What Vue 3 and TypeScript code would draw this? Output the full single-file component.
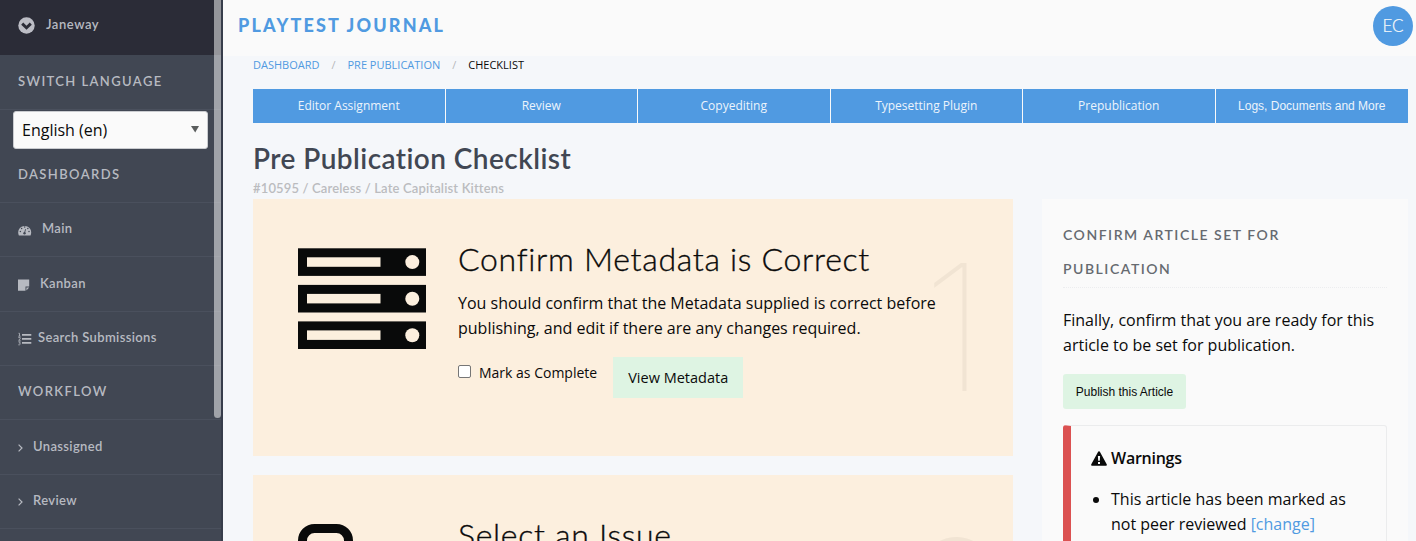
<script setup lang="ts">
const tabs: string[] = ['Editor Assignment', 'Review', 'Copyediting', 'Typesetting Plugin', 'Prepublication']
</script>

<template>
  <div class="page">
    <aside class="sidebar">
      <div class="brand">
        <svg width="17" height="17" viewBox="0 0 17 17"><circle cx="8.5" cy="8.5" r="8.2" fill="#bcbdc5" /><path d="M4.2 6.6 8.5 10.8 12.8 6.6" fill="none" stroke="#2b2c37" stroke-width="2.9" /></svg>
        <span>Janeway</span>
      </div>
      <div class="side-title bordered lang">SWITCH LANGUAGE</div>
      <div class="select"><span>English (en)</span><svg width="8" height="7" viewBox="0 0 8 7"><path d="M0 0H8L4.2 6.5Z" fill="#5a5d5d" /></svg></div>
      <div class="side-title bordered dash">DASHBOARDS</div>
      <div class="side-item bordered main-item">
        <svg width="14" height="12" viewBox="0 0 14 12"><path d="M.9 11.4A6.5 6.5 0 1 1 12.5 11.4Z" fill="#b7bac1" /><g fill="#414753"><circle cx="2.4" cy="7.6" r=".75" /><circle cx="3.6" cy="4.5" r=".75" /><circle cx="6.7" cy="3.1" r=".75" /><circle cx="9.8" cy="4.5" r=".75" /><circle cx="11" cy="7.6" r=".75" /><circle cx="6.5" cy="9.2" r="1.2" /></g><path d="M6.5 9 7.6 5.2" stroke="#414753" stroke-width=".9" /></svg>
        <span>Main</span>
      </div>
      <div class="side-item bordered kanban">
        <svg width="12" height="12" viewBox="0 0 12 12"><path d="M0 .5H11.2V7.5H7.5V11.7H0Z M8.4 8.5H11.2L8.4 11.4Z" fill="#b7bac1" /></svg>
        <span>Kanban</span>
      </div>
      <div class="side-item bordered search">
        <svg width="14" height="14" viewBox="0 0 14 14"><path d="M4 2.9H13.3M4 6.9H13.3M4 10.9H13.3" stroke="#b7bac1" stroke-width="1.8" /><path d="M.5 1.3H1.5V4M.3 4.2H2.6M.3 5.6H2.2V6.7L.6 8.3H2.6M.3 9.8H2.3L1.4 11.2C3 11.3 2.6 13.2.3 12.8" fill="none" stroke="#b7bac1" stroke-width=".8" /></svg>
        <span>Search Submissions</span>
      </div>
      <div class="side-title bordered flow">WORKFLOW</div>
      <div class="side-item bordered arrow">
        <svg width="5" height="8" viewBox="0 0 5 8"><path d="M.6.6 4 4 .6 7.4" fill="none" stroke="#b7bac1" stroke-width="1.2" /></svg>
        <span>Unassigned</span>
      </div>
      <div class="side-item bordered arrow review">
        <svg width="5" height="8" viewBox="0 0 5 8"><path d="M.6.6 4 4 .6 7.4" fill="none" stroke="#b7bac1" stroke-width="1.2" /></svg>
        <span>Review</span>
      </div>
      <div class="scroll-thumb"></div>
    </aside>

    <div class="content">
      <header class="topbar">
        <div class="journal">PLAYTEST JOURNAL</div>
        <div class="avatar">EC</div>
      </header>
      <main>
        <nav class="crumbs">
          <a class="c1">DASHBOARD</a><i>/</i><a class="c2">PRE PUBLICATION</a><i>/</i><b>CHECKLIST</b>
        </nav>
        <nav class="tabs">
          <a v-for="tab in tabs" :key="tab">{{ tab }}</a>
          <a class="more">Logs, Documents and More</a>
        </nav>
        <h1><span>Pre Publication Checklist</span></h1>
        <p class="sub"><span>#10595 / Careless / Late Capitalist Kittens</span></p>
        <div class="columns">
          <div class="cards">
            <section class="card">
              <svg class="card-icon" width="128" height="102" viewBox="0 0 128 102">
                <g v-for="y in [0.3, 36.9, 73.4]" :key="y" :transform="`translate(0 ${y})`">
                  <rect width="128" height="27.6" fill="#090a0a" />
                  <rect x="9" y="9" width="73.5" height="9.5" fill="#fcefde" />
                  <circle cx="114.3" cy="13.8" r="7" fill="#fcefde" />
                </g>
              </svg>
              <div class="card-body">
                <h2 class="t1">Confirm Metadata is Correct</h2>
                <p class="desc">You should confirm that the Metadata supplied is correct before<br />publishing, and edit if there are any changes required.</p>
                <div class="actions">
                  <span class="box"></span><span class="mark">Mark as Complete</span>
                  <a class="view">View Metadata</a>
                </div>
              </div>
              <div class="number">1</div>
            </section>
            <section class="card">
              <svg class="card-icon" width="128" height="102" viewBox="0 0 128 102"><rect x="4.5" y="4.5" width="46" height="90" rx="12" fill="none" stroke="#090a0a" stroke-width="9" /></svg>
              <div class="card-body">
                <h2 class="t2">Select an Issue</h2>
              </div>
              <div class="number">2</div>
            </section>
          </div>
          <section class="panel">
            <h3><span class="p1">CONFIRM ARTICLE SET FOR</span><br /><span class="p2">PUBLICATION</span></h3>
            <p class="final">Finally, confirm that you are ready for this<br />article to be set for publication.</p>
            <a class="publish">Publish this Article</a>
            <div class="warning">
              <div class="warn-title">
                <svg width="16" height="15" viewBox="0 0 16 15"><path d="M8 .2C8.6.2 8.8.6 9 1L15.7 13.2C16.1 14 15.7 14.8 14.8 14.8H1.2C.3 14.8-.1 14 .3 13.2L7 1C7.2.6 7.4.2 8 .2Z" fill="#090a0a" /><path d="M6.9 5H9.1L8.8 9.8H7.2ZM7 11H9V12.9H7Z" fill="#fafafa" /></svg>
                <strong>Warnings</strong>
              </div>
              <ul><li>This article has been marked as<br />not peer reviewed <a>[change]</a></li></ul>
            </div>
          </section>
        </div>
      </main>
    </div>
  </div>
</template>

<style>
body { margin: 0; overflow: hidden; }
</style>

<style scoped>
* { box-sizing: border-box; }
.page { width: 1416px; height: 541px; overflow: hidden; display: flex; background: #f5f7fa; color: #0a0a0a; font-family: "Open Sans", sans-serif; font-size: 16px; font-variant-ligatures: none; }
.page span, .page a, h2 { white-space: nowrap; }
.sidebar { position: relative; width: 223px; height: 541px; flex: none; background: #414753; border-right: 2px solid #373d4b; font-family: Lato, sans-serif; color: #b7bac1; overflow: hidden; }
.brand { height: 55px; margin-right: -2px; background: #2b2c37; padding: 0 0 7px 18px; display: flex; align-items: center; gap: 11px; font-size: 13px; font-weight: 600; letter-spacing: .55px; }
.brand svg { position: relative; top: 1px; }
.bordered { border-bottom: 1px solid #4a505d; }
.side-title { height: 54px; padding-left: 18px; line-height: 51px; font-size: 13px; font-weight: 600; letter-spacing: 1.4px; }
.lang { height: 55px; line-height: 53px; }
.select { margin: 1px 0 0 13px; width: 195px; height: 38px; border-radius: 3px; background: #fafafa; border: 1px solid #caccd0; display: flex; align-items: center; justify-content: space-between; padding: 0 8px 1px 8px; color: #0a0a0a; font-family: "Open Sans", sans-serif; font-size: 16px; }
.side-item { height: 54.4px; padding-left: 18px; display: flex; align-items: center; gap: 10px; font-size: 13px; font-weight: 600; letter-spacing: .35px; }
.side-item span { position: relative; top: -1px; }
.side-item svg { position: relative; top: 1px; }
.main-item span { top: -2px; }
.main-item svg { top: 0; }
.search { gap: 6px; }
.arrow { gap: 10px; }
.scroll-thumb { position: absolute; top: -4px; left: 214px; width: 7px; height: 422px; border-radius: 4px; background: rgba(255,255,255,.5); }
.content { width: 1193px; }
.topbar { height: 56px; background: #fafafa; display: flex; justify-content: space-between; padding: 6px 3px 0 15px; }
.journal { color: #509ae1; font: 900 18px/38px Lato, sans-serif; letter-spacing: 2.17px; }
.avatar { width: 40px; height: 40px; border-radius: 50%; background: #509ae1; color: #fafafa; text-align: center; font: 300 17px/39px Lato, sans-serif; -webkit-text-stroke: .2px #fafafa; }
main { padding: 0 8px 0 30px; }
.crumbs { height: 33px; padding-top: 1px; line-height: 16px; font-size: 11px; display: flex; }
.crumbs a { color: #509ae1; }
.crumbs i { width: 28px; text-align: center; color: #b5b7ba; font-style: normal; }
.crumbs b { font-weight: 400; }
.tabs { display: grid; grid-template-columns: repeat(6, 1fr); height: 34px; }
.tabs a { background: #509ae1; color: #ecf4fc; border-right: 1px solid #fafafa; text-align: center; font-size: 12px; line-height: 34px; }
.tabs .more { border: 0; font-family: "Liberation Sans", Arial, sans-serif; }
h1 { margin: 16px 0 0; height: 39px; font: 600 28px/38px Lato, sans-serif; color: #414753; letter-spacing: .43px; }
.sub { margin: 0; height: 21px; font: 600 13px/21px Lato, sans-serif; color: #bbbcbf; letter-spacing: .15px; }
.columns { display: flex; justify-content: space-between; }
.cards { width: 760px; display: flex; flex-direction: column; gap: 19px; }
.card { height: 257px; background: #fcefde; display: flex; padding: 49px 0 0 45px; }
.card-icon { flex: none; margin-right: 32px; }
.card-body { width: 446px; flex: none; }
h2 { margin: -10px 0 0; font: 300 32px/42px Lato, sans-serif; letter-spacing: .7px; -webkit-text-stroke: .35px #0a0a0a; }
.desc { margin: 11px 0 16px; line-height: 25px; white-space: nowrap; }
.actions { display: flex; font-size: 14px; }
.box { width: 13px; height: 13px; margin: 8px 8px 0 0; border: 1px solid #767676; border-radius: 2px; background: #fff; }
.mark { line-height: 32px; }
.view { margin-left: 16px; padding: 0 15px; height: 41px; line-height: 41px; font-size: 14.5px; background: #def4e3; }
.number { width: 100px; height: 170px; margin-top: -6px; text-align: center; font: 100 176px/170px Inter, sans-serif; color: #f1e4d3; }
.panel { width: 366px; height: 400px; background: #fafafa; padding: 19px 21px 0; }
h3 { margin: 0 0 20px; height: 70px; border-bottom: 1px dotted #ecedef; font: 600 14px/34px Lato, sans-serif; letter-spacing: 1.52px; color: #666a70; }
.final { margin: 0 0 16px; line-height: 25px; white-space: nowrap; }
.publish { display: block; width: 123px; height: 35px; border-radius: 3px; background: #def4e3; text-align: center; font: 12px/36px "Liberation Sans", Arial, sans-serif; }
.warning { margin-top: 16px; height: 220px; border: 1px solid #ebeced; border-left: 8px solid #db5151; border-radius: 3px; padding: 20px 0 0 20px; }
.warn-title { height: 25px; line-height: 25px; display: flex; align-items: center; gap: 4px; letter-spacing: -.25px; }
.warn-title strong { font-weight: 600; }
ul { margin: 16px 0 0; padding-left: 20px; line-height: 25px; }
li a { color: #509ae1; }
</style>
